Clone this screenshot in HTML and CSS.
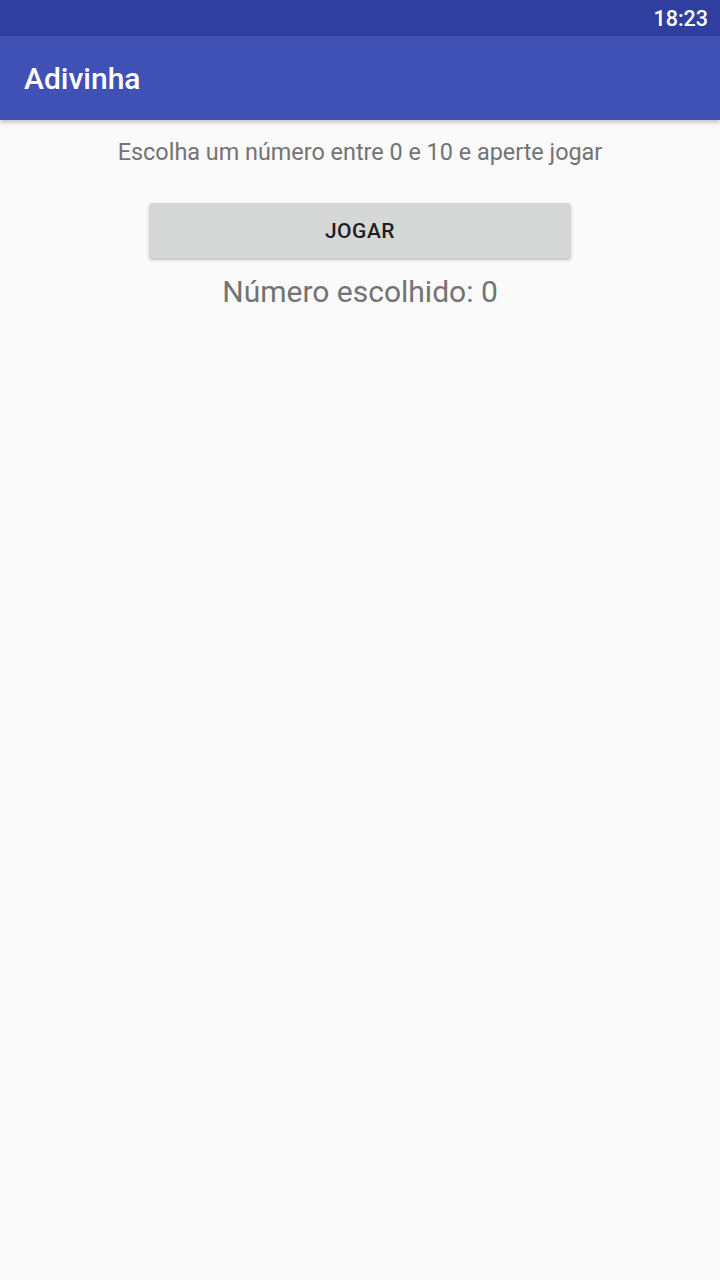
FILE: index.html
```html
<!DOCTYPE html>
<html lang="pt">
<head>
<meta charset="utf-8">
<title>Adivinha</title>
<link rel="stylesheet" href="styles.css">
</head>
<body>
<div class="screen">
  <div class="status-bar"><span class="time">18:23</span></div>
  <header class="app-bar"><h1 class="title">Adivinha</h1></header>
  <main class="content">
    <p class="hint">Escolha um número entre 0 e 10 e aperte jogar</p>
    <button class="play">JOGAR</button>
    <p class="result">Número escolhido: 0</p>
  </main>
</div>
</body>
</html>
```
FILE: styles.css
```css
html, body {
  margin: 0;
  padding: 0;
  background: #fafafa;
}
.screen {
  width: 720px;
  height: 1280px;
  display: flex;
  flex-direction: column;
  font-family: Roboto, "Noto Sans", sans-serif;
  background: #fafafa;
  overflow: hidden;
}
.status-bar {
  height: 36px;
  background: #303f9f;
  display: flex;
  align-items: center;
  justify-content: flex-end;
  padding-right: 12px;
}
.time {
  color: #ffffff;
  font-size: 21.5px;
  font-weight: 500;
}
.app-bar {
  height: 84px;
  background: #3f51b5;
  display: flex;
  align-items: center;
  padding-left: 24px;
  box-shadow: 0 2px 5px rgba(0,0,0,0.25);
  position: relative;
  z-index: 1;
}
.title {
  margin: 0;
  color: #ffffff;
  font-size: 30px;
  font-weight: 500;
}
.content {
  display: flex;
  flex-direction: column;
  align-items: center;
}
.hint {
  margin: 16px 0 0;
  font-size: 23.4px;
  line-height: 32px;
  color: #737373;
}
.play {
  margin-top: 35px;
  width: 422px;
  height: 55px;
  border: none;
  border-radius: 3px;
  background: #d6d7d7;
  color: #1f1f1f;
  font-family: Roboto, "Noto Sans", sans-serif;
  font-size: 21px;
  font-weight: 500;
  letter-spacing: 0.5px;
  box-shadow: 0 2px 3px rgba(0,0,0,0.22);
}
.result {
  margin: 14px 0 0;
  font-size: 30px;
  line-height: 40px;
  color: #737373;
}
```
